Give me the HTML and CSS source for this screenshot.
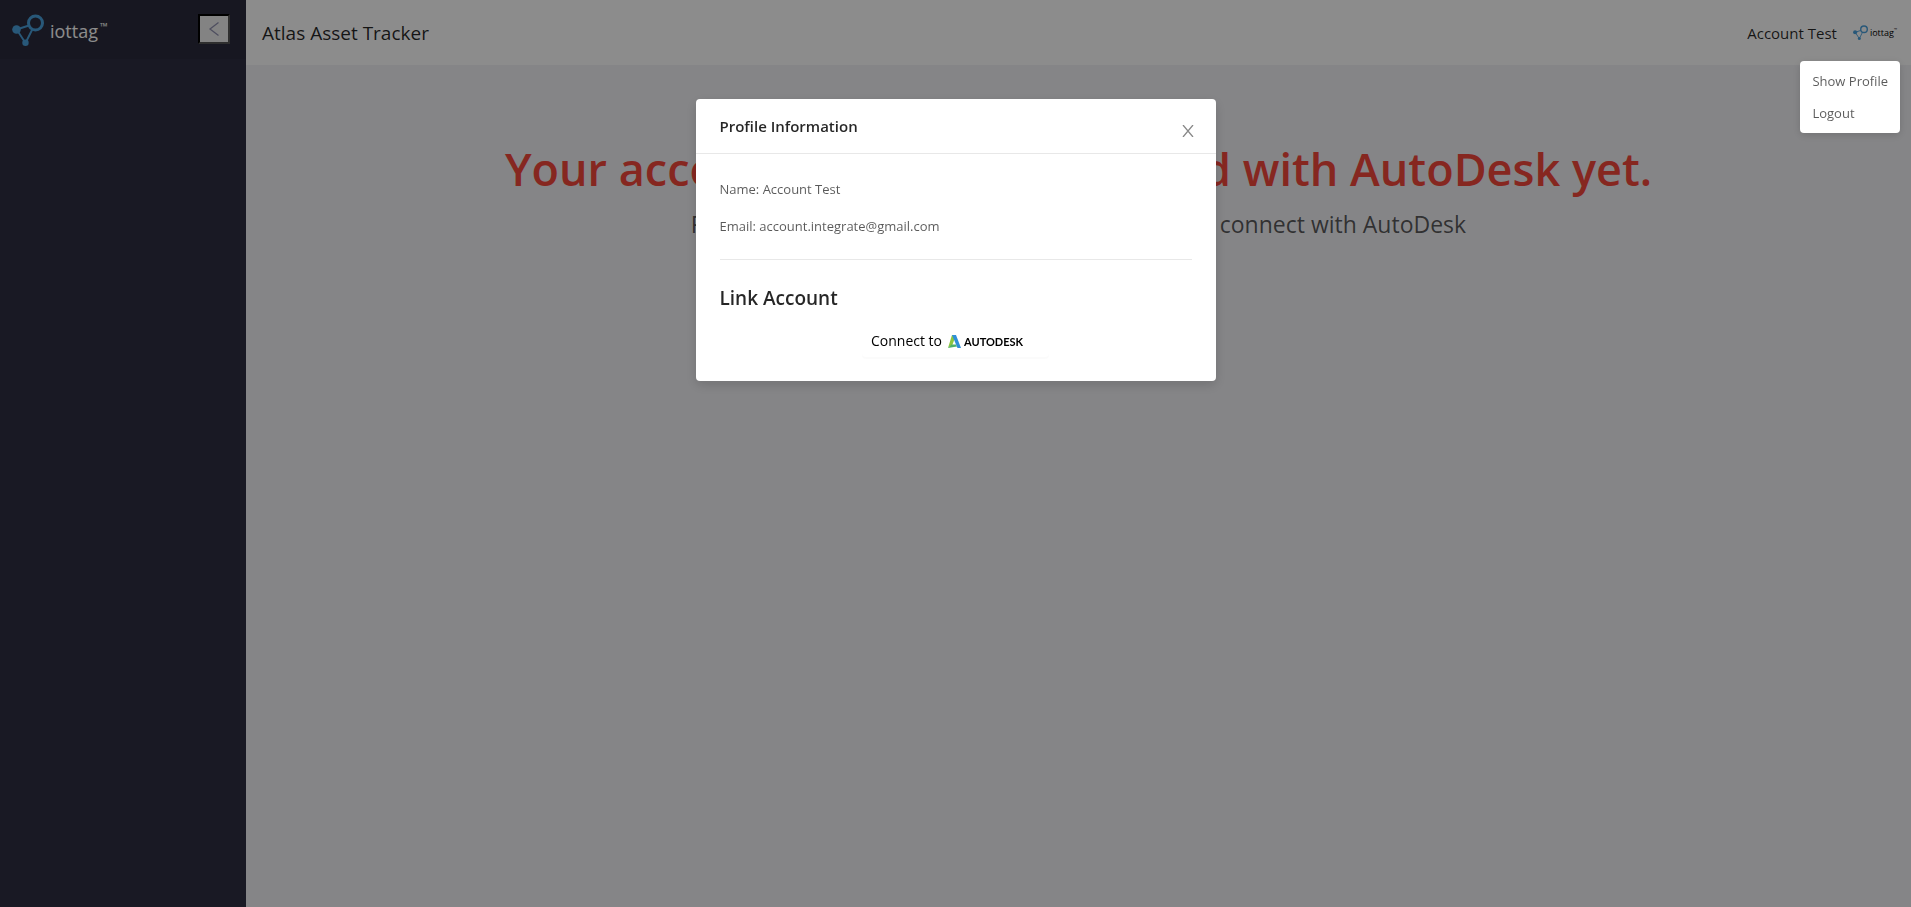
FILE: index.html
```html
<!DOCTYPE html>
<html lang="en">
<head>
  <meta charset="UTF-8" />
  <meta name="viewport" content="width=device-width, initial-scale=1.0"/>
  <title>Atlas Asset Tracker</title>
  <link rel="stylesheet" href="styles.css">
</head>
<body>
  <svg class="sprite" width="0" height="0" aria-hidden="true">
    <symbol id="iottag-mark" viewBox="0 0 32 32">
      <g fill="none" stroke="currentColor">
        <circle cx="23.5" cy="9" r="7" stroke-width="3"/>
        <path d="M4.5 15.500L17 11.500M5 16l8.500 13M20.500 15L14 28" stroke-width="1.900"/>
      </g>
      <circle cx="4.500" cy="15.500" r="4.300" fill="currentColor"/>
      <circle cx="13.500" cy="28.700" r="3.200" fill="currentColor"/>
    </symbol>
  </svg>

  <div class="layout">
    <aside class="sidebar">
      <div class="sidebar-top">
        <a class="brand" href="#">
          <svg class="brand-mark"><use href="#iottag-mark"/></svg>
          <span class="brand-name">iottag</span><span class="brand-tm">™</span>
        </a>
        <button class="collapse-button" type="button" aria-label="Collapse menu">
          <svg viewBox="0 0 16 16" fill="none" stroke="currentColor" stroke-width="1.3"><path d="M12.500 1.500L4 8l8.500 6.500"/></svg>
        </button>
      </div>
    </aside>

    <div class="page">
      <header class="header">
        <span class="header-title">Atlas Asset Tracker</span>
        <div class="account">
          <span class="account-name">Account Test</span>
          <div class="brand brand-small">
            <svg class="brand-mark"><use href="#iottag-mark"/></svg>
            <span class="brand-name">iottag</span><span class="brand-tm">™</span>
          </div>
        </div>
      </header>
      <main class="content">
        <h1 class="result-title">Your account has not been linked with AutoDesk yet.</h1>
        <p class="result-text">Please go to your Profile Information section and connect with AutoDesk</p>
      </main>
    </div>
  </div>

  <div class="mask">
    <section class="modal" role="dialog" aria-labelledby="modal-title">
      <div class="modal-header">
        <h2 class="modal-title" id="modal-title">Profile Information</h2>
        <button class="close-button" type="button" aria-label="Close">
          <svg viewBox="0 0 12 12" fill="none" stroke="currentColor" stroke-width="1.3"><path d="M1 0l10 12M11 0L1 12"/></svg>
        </button>
      </div>
      <div class="modal-body">
        <p>Name: Account Test</p>
        <p>Email: account.integrate@gmail.com</p>
        <hr class="divider">
        <h3 class="link-title">Link Account</h3>
        <button class="connect-button" type="button">
          <span>Connect to</span>
          <span class="autodesk">
            <svg viewBox="0 0 13 13">
              <path d="M0 13L4 0h4L4.500 9.500z" fill="#8cc63f"/>
              <path d="M0 13L3.500 9.500H8l1 2z" fill="#4fb06a"/>
              <path d="M4 0h4l5 13H9.500z" fill="#2f8fd8"/>
            </svg>
            <span class="autodesk-name">AUTODESK</span>
          </span>
        </button>
      </div>
    </section>
  </div>

  <ul class="account-menu">
    <li><a href="#">Show Profile</a></li>
    <li><a href="#">Logout</a></li>
  </ul>
</body>
</html>
```

FILE: styles.css
```css
:root {
  --sidebar-bg: #2f2f42;
  --sidebar-top-bg: #2b2b3c;
  --page-bg: #f2f2f6;
  --text: rgba(0, 0, 0, 0.85);
  --text-light: rgba(0, 0, 0, 0.65);
  --line: #e8e8e8;
  --danger: #f5473b;
  --brand: #4aa0dc;
}

* {
  margin: 0;
  padding: 0;
  box-sizing: border-box;
}

body {
  font-family: "Segoe UI", "Open Sans", sans-serif;
  font-size: 13px;
  line-height: 22px;
  color: var(--text-light);
  background: var(--page-bg);
}

button {
  font: inherit;
  cursor: pointer;
}

a {
  color: inherit;
  text-decoration: none;
}

.sprite {
  position: absolute;
}

.layout {
  display: flex;
  min-height: 100vh;
}

/* Sidebar */
.sidebar {
  width: 246px;
  flex-shrink: 0;
  background: var(--sidebar-bg);
}

.sidebar-top {
  display: flex;
  justify-content: space-between;
  padding: 14px 16px 0 12px;
  height: 59px;
  background: var(--sidebar-top-bg);
}

.brand {
  display: flex;
  height: 32px;
  color: #fff;
}

.brand-mark {
  width: 32px;
  height: 32px;
  margin-right: 6px;
  color: var(--brand);
}

.brand-name {
  font-family: "Open Sans", sans-serif;
  font-size: 18px;
  line-height: 34px;
}

.brand-tm {
  font-size: 10px;
  line-height: 24px;
  margin-left: 2px;
}

.collapse-button {
  display: flex;
  align-items: center;
  justify-content: center;
  width: 32px;
  height: 30px;
  background: #efefef;
  border: 2px solid;
  border-color: #000 #555 #555 #000;
  color: #8f8fae;
}

.collapse-button svg {
  width: 16px;
  height: 16px;
}

/* Header */
.page {
  flex: 1;
}

.header {
  display: flex;
  align-items: center;
  justify-content: space-between;
  height: 65px;
  padding: 0 14px 0 16px;
  background: #fff;
  color: var(--text);
}

.header-title {
  font-size: 19px;
}

.account {
  display: flex;
  align-items: center;
  gap: 16px;
}

.account-name {
  font-size: 15px;
}

.brand-small {
  height: 15px;
  color: #000;
}

.brand-small .brand-mark {
  width: 15px;
  height: 15px;
  margin-right: 2px;
}

.brand-small .brand-name {
  font-size: 9px;
  line-height: 15px;
}

.brand-small .brand-tm {
  font-size: 4px;
  line-height: 10px;
  margin-left: 0;
}

/* Content */
.content {
  padding: 71px 16px;
  text-align: center;
}

.result-title {
  font-size: 45px;
  line-height: 66px;
  font-weight: 600;
  color: var(--danger);
}

.result-text {
  font-size: 23px;
  line-height: 44px;
}

/* Profile modal */
.mask {
  position: fixed;
  inset: 0;
  padding-top: 99px;
  background: rgba(0, 0, 0, 0.45);
}

.modal {
  width: 520px;
  margin: 0 auto;
  background: #fff;
  border-radius: 4px;
  box-shadow: 0 4px 12px rgba(0, 0, 0, 0.15);
}

.modal-header {
  display: flex;
  align-items: center;
  justify-content: space-between;
  height: 55px;
  padding: 0 21px 0 24px;
  border-bottom: 1px solid var(--line);
}

.modal-title {
  font-size: 15px;
  font-weight: 600;
  color: var(--text);
}

.close-button {
  display: flex;
  padding: 10px 0 0;
  border: 0;
  background: none;
  color: #888;
}

.close-button svg {
  width: 14px;
  height: 12px;
}

.modal-body {
  padding: 24px;
}

.modal-body p {
  margin-bottom: 15px;
}

.divider {
  margin: 22px 0 24px;
  border: 0;
  border-top: 1px solid var(--line);
}

.link-title {
  margin-bottom: 13px;
  font-size: 19px;
  line-height: 28px;
  font-weight: 600;
  color: var(--text);
}

.connect-button {
  display: flex;
  align-items: center;
  gap: 6px;
  width: 187px;
  height: 32px;
  margin: 0 auto;
  padding: 0 9px;
  border: 0;
  border-radius: 4px;
  background: #fff;
  box-shadow: 0 2px 0 rgba(0, 0, 0, 0.015);
  color: #000;
  font-size: 14px;
}

.autodesk {
  display: flex;
  align-items: center;
  gap: 3px;
}

.autodesk svg {
  width: 13px;
  height: 13px;
}

.autodesk-name {
  font-family: Lato, sans-serif;
  font-size: 11px;
  line-height: 13px;
  font-weight: 700;
}

/* Account dropdown */
.account-menu {
  position: fixed;
  top: 61px;
  right: 11px;
  padding: 4px 0;
  list-style: none;
  background: #fff;
  border-radius: 4px;
  box-shadow: 0 2px 8px rgba(0, 0, 0, 0.15);
}

.account-menu a {
  display: block;
  padding: 5px 12px;
}
```
